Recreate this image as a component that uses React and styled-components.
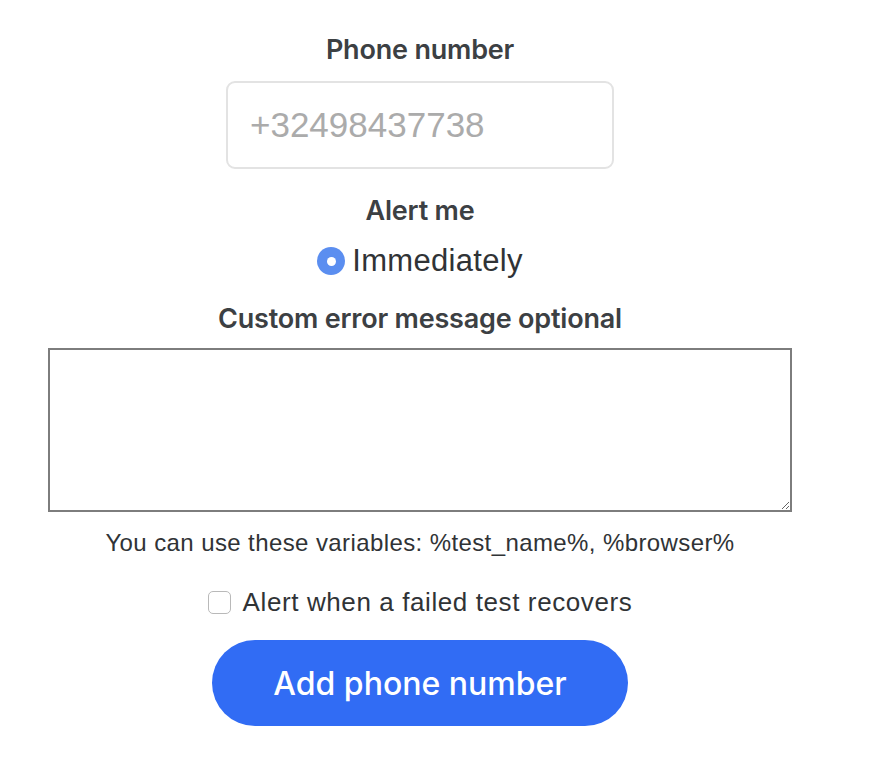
import React from 'react';
import styled, { createGlobalStyle } from 'styled-components';

const GlobalStyle = createGlobalStyle`
  body {
    margin: 0;
    background: #ffffff;
    font-family: Inter, "Noto Sans", sans-serif;
    color: #3c4043;
  }
`;

const Form = styled.form`
  width: 840px;
  padding-top: 34px;
  display: flex;
  flex-direction: column;
  align-items: center;
`;

const Label = styled.label`
  display: block;
  font-size: ${({ size }) => size || 27}px;
  font-weight: 600;
  line-height: 32px;
  letter-spacing: -0.2px;
  color: #3c4043;
  margin-top: ${({ gap }) => gap || 0}px;
  text-align: center;
`;

const PhoneInput = styled.input`
  box-sizing: border-box;
  width: 388px;
  height: 88px;
  margin-top: 15px;
  padding: 0 22px;
  border: 2px solid #e3e3e3;
  border-radius: 9px;
  font-family: "Liberation Sans", Arial, sans-serif;
  font-size: 35px;
  color: #3c4043;
  outline: none;

  &::placeholder {
    color: #ababab;
  }
`;

const OptionRow = styled.label`
  display: flex;
  align-items: center;
  gap: ${({ gap }) => gap || 8}px;
  height: ${({ h }) => h || 34}px;
  margin-top: ${({ top }) => top || 0}px;
  font-family: "Liberation Sans", Arial, sans-serif;
  font-size: ${({ size }) => size || 22}px;
  letter-spacing: ${({ spacing }) => spacing || 0}px;
  color: #303336;
  cursor: pointer;
`;

const Radio = styled.span`
  width: 28px;
  height: 28px;
  border-radius: 50%;
  background: #5b8ef0;
  display: flex;
  align-items: center;
  justify-content: center;

  &::after {
    content: '';
    width: 9px;
    height: 9px;
    border-radius: 50%;
    background: #ffffff;
  }
`;

const Checkbox = styled.span`
  box-sizing: border-box;
  width: 23px;
  height: 23px;
  border: 1.5px solid #b9b9b9;
  border-radius: 5px;
  background: #ffffff;
`;

const Message = styled.textarea`
  box-sizing: border-box;
  display: block;
  width: 744px;
  height: 164px;
  margin-top: 13px;
  border: 2px solid #7d7d7d;
  border-radius: 0;
  padding: 6px;
  font-family: "Liberation Sans", Arial, sans-serif;
  font-size: 18px;
  outline: none;
`;

const Hint = styled.p`
  margin: 17px 0 0;
  font-family: "Liberation Sans", Arial, sans-serif;
  font-size: 24px;
  line-height: 28px;
  letter-spacing: 0.4px;
  color: #303336;
  text-align: center;
`;

const SubmitButton = styled.button`
  margin-top: 23px;
  width: 416px;
  height: 86px;
  border: none;
  border-radius: 43px;
  background: #316cf4;
  color: #ffffff;
  font-family: Inter, "Noto Sans", sans-serif;
  font-size: 32px;
  font-weight: 500;
  cursor: pointer;
`;

export default function App() {
  return (
    <>
      <GlobalStyle />
      <Form onSubmit={(e) => e.preventDefault()}>
        <Label size={27}>Phone number</Label>
        <PhoneInput type="tel" placeholder="+32498437738" />

        <Label size={27} gap={26}>Alert me</Label>
        <OptionRow top={17} size={31} gap={7} spacing={0.3}>
          <Radio />
          Immediately
        </OptionRow>

        <Label size={27} gap={25}>Custom error message optional</Label>
        <Message />
        <Hint>You can use these variables: %test_name%, %browser%</Hint>

        <OptionRow top={30} h={30} size={26} gap={12} spacing={0.6}>
          <Checkbox />
          Alert when a failed test recovers
        </OptionRow>

        <SubmitButton type="submit">Add phone number</SubmitButton>
      </Form>
    </>
  );
}
